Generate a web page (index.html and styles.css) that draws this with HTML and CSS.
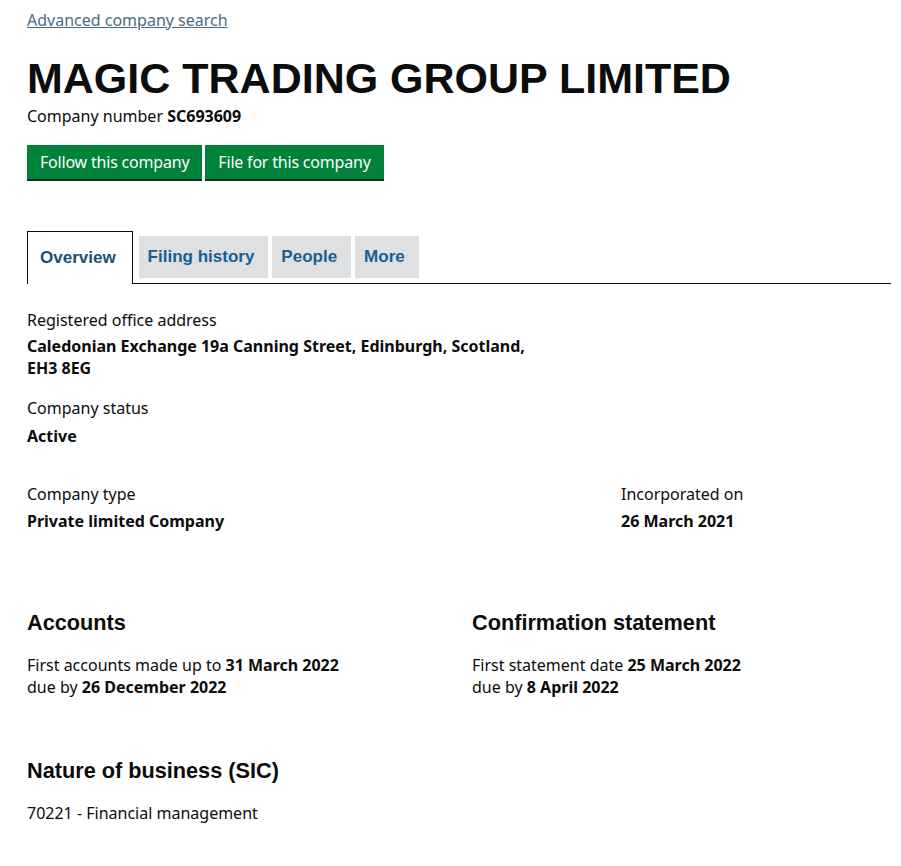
FILE: index.html
```html
<!DOCTYPE html>
<html lang="en">

<head>
    <meta charset="UTF-8">
    <meta name="viewport" content="width=device-width, initial-scale=1.0">
    <title>MAGIC TRADING GROUP LIMITED overview</title>
    <link rel="stylesheet" href="styles.css">
</head>

<body>
    <main id="page">
        <a href="#" class="back-link">Advanced company search</a>

        <h1 class="company-name">MAGIC TRADING GROUP LIMITED</h1>
        <p class="company-number">Company number <strong>SC693609</strong></p>

        <div class="actions">
            <a href="#" class="button">Follow this company</a>
            <a href="#" class="button">File for this company</a>
        </div>

        <ul class="tabs">
            <li class="tab active"><a href="#">Overview</a></li>
            <li class="tab"><a href="#">Filing history</a></li>
            <li class="tab"><a href="#">People</a></li>
            <li class="tab"><a href="#">More</a></li>
        </ul>

        <dl class="field address">
            <dt>Registered office address</dt>
            <dd>Caledonian Exchange 19a Canning Street, Edinburgh, Scotland, EH3 8EG</dd>
        </dl>

        <dl class="field status">
            <dt>Company status</dt>
            <dd>Active</dd>
        </dl>

        <div class="row thirds">
            <dl class="field">
                <dt>Company type</dt>
                <dd>Private limited Company</dd>
            </dl>
            <dl class="field">
                <dt>Incorporated on</dt>
                <dd>26 March 2021</dd>
            </dl>
        </div>

        <div class="row halves">
            <section>
                <h2>Accounts</h2>
                <p>First accounts made up to <strong>31 March 2022</strong><br>
                    due by <strong>26 December 2022</strong></p>
            </section>
            <section>
                <h2>Confirmation statement</h2>
                <p>First statement date <strong>25 March 2022</strong><br>
                    due by <strong>8 April 2022</strong></p>
            </section>
        </div>

        <section class="sic">
            <h2>Nature of business (SIC)</h2>
            <ul>
                <li>70221 - Financial management</li>
            </ul>
        </section>
    </main>
</body>

</html>
```

FILE: styles.css
```css
body {
    margin: 0;
    background-color: #fff;
    color: #0b0c0c;
    font-family: "Noto Sans", Arial, sans-serif;
    font-size: 16px;
    line-height: 1.4;
}

#page {
    padding: 8px 10px 20px 27px;
}

.back-link {
    display: inline-block;
    margin-top: 1px;
    color: #4c6b82;
    font-size: 16px;
    text-decoration: underline;
}

.company-name {
    margin: 22px 0 0;
    font-family: "Liberation Sans", Arial, sans-serif;
    font-size: 43px;
    font-weight: 700;
    line-height: 1.2;
}

.company-number {
    margin: 0;
    font-size: 16px;
}

.actions {
    display: flex;
    gap: 3px;
    margin-top: 18px;
}

.button {
    display: inline-block;
    padding: 6px 13px 5px;
    background-color: #00823b;
    color: #fff;
    font-size: 16px;
    letter-spacing: -0.2px;
    text-decoration: none;
    box-shadow: 0 2px 0 #003618;
}

.tabs {
    display: flex;
    align-items: flex-end;
    gap: 4px;
    margin: 52px 0 0;
    padding: 0;
    list-style: none;
    border-bottom: 1px solid #0b0c0c;
}

.tab {
    margin-bottom: 5px;
    background-color: #dee0e2;
}

.tab a {
    display: block;
    padding: 9px 14px 9px 9px;
    color: #1a5d91;
    font-family: "Liberation Sans", Arial, sans-serif;
    font-size: 17px;
    font-weight: 700;
    text-decoration: none;
}

.tab.active {
    margin-bottom: -1px;
    margin-right: 2px;
    background-color: #fff;
    border: 1px solid #0b0c0c;
    border-bottom: none;
}

.tab.active a {
    padding: 14px 16px 14px 12px;
    color: #1d4f73;
}

.field {
    margin: 0;
}

.field dt {
    margin: 0;
}

.field dd {
    margin: 5px 0 0;
    font-weight: 700;
}

.address {
    margin-top: 25px;
}

.address dd {
    max-width: 530px;
    line-height: 1.35;
}

.status {
    margin-top: 18px;
}

.row {
    display: grid;
}

.thirds {
    grid-template-columns: 2fr 1fr;
    column-gap: 54px;
    margin-top: 36px;
}

.halves {
    grid-template-columns: 1fr 1fr;
    column-gap: 26px;
    margin-top: 75px;
}

h2 {
    margin: 0;
    font-family: "Liberation Sans", Arial, sans-serif;
    font-size: 21.7px;
    font-weight: 700;
}

.halves p {
    margin: 16px 0 0;
}

.sic {
    margin-top: 57px;
}

.sic ul {
    margin: 16px 0 0;
    padding: 0;
    list-style: none;
}
```
